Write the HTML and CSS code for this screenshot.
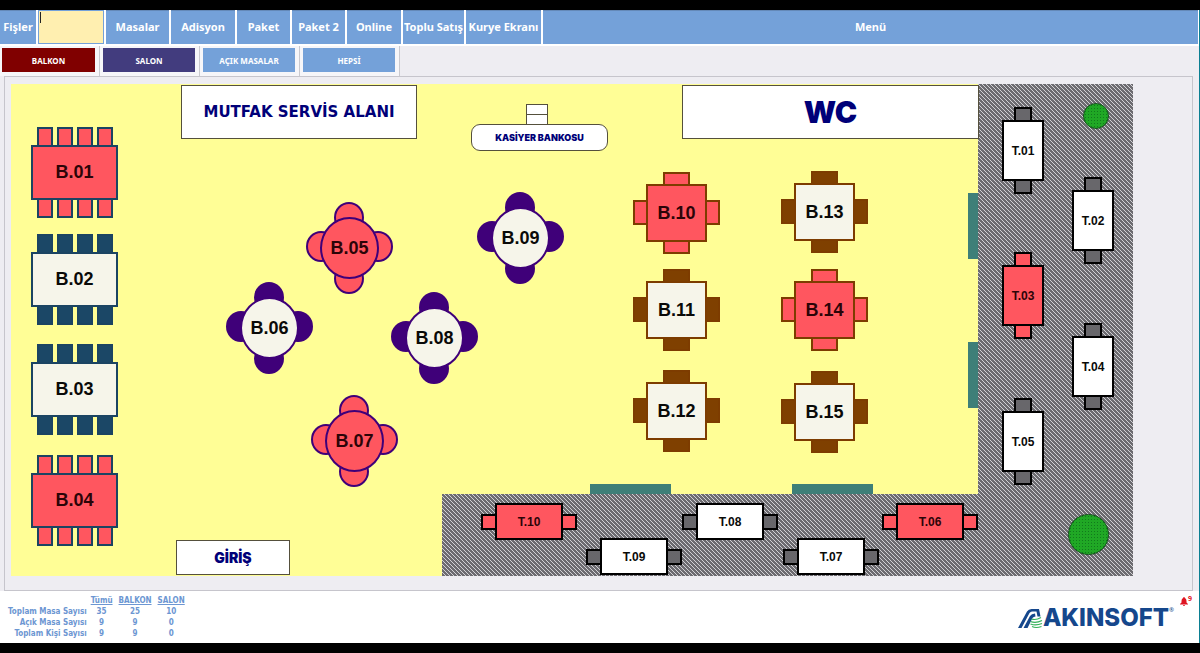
FILE: index.html
```html
<!DOCTYPE html>
<html lang="tr">
<head>
<meta charset="utf-8">
<title>Masalar</title>
<link rel="stylesheet" href="styles.css">
</head>
<body>
<div class="app">
  <nav class="menu" aria-label="Ana menü">
    <button type="button">Fişler</button>
    <div class="code"><input type="text" aria-label="Fiş kodu"><span class="caret"></span></div>
    <button type="button">Masalar</button>
    <button type="button">Adisyon</button>
    <button type="button">Paket</button>
    <button type="button">Paket 2</button>
    <button type="button">Online</button>
    <button type="button">Toplu Satış</button>
    <button type="button">Kurye Ekranı</button>
    <button type="button">Menü</button>
  </nav>

  <div class="areas">
    <div class="area"><button type="button" class="area-btn red">BALKON</button></div>
    <div class="area"><button type="button" class="area-btn indigo">SALON</button></div>
    <div class="area"><button type="button" class="area-btn">AÇIK MASALAR</button></div>
    <div class="area"><button type="button" class="area-btn">HEPSİ</button></div>
  </div>

  <main class="panel">
    <div class="plan">
      <svg class="terrace" viewBox="0 0 691 492" aria-hidden="true">
        <defs>
          <pattern id="hatch" width="4" height="4" patternUnits="userSpaceOnUse">
            <rect width="4" height="4" fill="#6c6b70"/>
            <path d="M-1 -1 L5 5 M3 -1 L5 1 M-1 3 L1 5" stroke="#d2d1d5" stroke-width="1"/>
          </pattern>
        </defs>
        <path d="M536 0 H691 V492 H0 V410 H536Z" fill="url(#hatch)"/>
      </svg>
      <div class="door door-v door-1"></div>
      <div class="door door-v door-2"></div>
      <div class="door door-h door-3"></div>
      <div class="door door-h door-4"></div>
      <div class="tree tree-small"></div>
      <div class="tree tree-large"></div>

      <div class="sign sign-kitchen">MUTFAK SERVİS ALANI</div>
      <div class="sign sign-wc">WC</div>
      <div class="sign sign-entry">GİRİŞ</div>
      <div class="till"></div>
      <div class="sign sign-cashier">KASİYER BANKOSU</div>

      <button type="button" class="table long busy b01"><span class="row"><i></i><i></i><i></i><i></i></span><span class="top">B.01</span><span class="row"><i></i><i></i><i></i><i></i></span></button>
      <button type="button" class="table long b02"><span class="row"><i></i><i></i><i></i><i></i></span><span class="top">B.02</span><span class="row"><i></i><i></i><i></i><i></i></span></button>
      <button type="button" class="table long b03"><span class="row"><i></i><i></i><i></i><i></i></span><span class="top">B.03</span><span class="row"><i></i><i></i><i></i><i></i></span></button>
      <button type="button" class="table long busy b04"><span class="row"><i></i><i></i><i></i><i></i></span><span class="top">B.04</span><span class="row"><i></i><i></i><i></i><i></i></span></button>

      <button type="button" class="table round busy b05"><i class="n"></i><i class="w"></i><i class="e"></i><i class="s"></i><span class="top">B.05</span></button>
      <button type="button" class="table round b06"><i class="n"></i><i class="w"></i><i class="e"></i><i class="s"></i><span class="top">B.06</span></button>
      <button type="button" class="table round busy b07"><i class="n"></i><i class="w"></i><i class="e"></i><i class="s"></i><span class="top">B.07</span></button>
      <button type="button" class="table round b08"><i class="n"></i><i class="w"></i><i class="e"></i><i class="s"></i><span class="top">B.08</span></button>
      <button type="button" class="table round b09"><i class="n"></i><i class="w"></i><i class="e"></i><i class="s"></i><span class="top">B.09</span></button>

      <button type="button" class="table square busy b10"><i class="n"></i><i class="w"></i><i class="e"></i><i class="s"></i><span class="top">B.10</span></button>
      <button type="button" class="table square b11"><i class="n"></i><i class="w"></i><i class="e"></i><i class="s"></i><span class="top">B.11</span></button>
      <button type="button" class="table square b12"><i class="n"></i><i class="w"></i><i class="e"></i><i class="s"></i><span class="top">B.12</span></button>
      <button type="button" class="table square b13"><i class="n"></i><i class="w"></i><i class="e"></i><i class="s"></i><span class="top">B.13</span></button>
      <button type="button" class="table square busy b14"><i class="n"></i><i class="w"></i><i class="e"></i><i class="s"></i><span class="top">B.14</span></button>
      <button type="button" class="table square b15"><i class="n"></i><i class="w"></i><i class="e"></i><i class="s"></i><span class="top">B.15</span></button>

      <button type="button" class="table pair tall t01"><i></i><span class="top">T.01</span><i></i></button>
      <button type="button" class="table pair tall t02"><i></i><span class="top">T.02</span><i></i></button>
      <button type="button" class="table pair tall busy t03"><i></i><span class="top">T.03</span><i></i></button>
      <button type="button" class="table pair tall t04"><i></i><span class="top">T.04</span><i></i></button>
      <button type="button" class="table pair tall t05"><i></i><span class="top">T.05</span><i></i></button>
      <button type="button" class="table pair wide busy t06"><i></i><span class="top">T.06</span><i></i></button>
      <button type="button" class="table pair wide t07"><i></i><span class="top">T.07</span><i></i></button>
      <button type="button" class="table pair wide t08"><i></i><span class="top">T.08</span><i></i></button>
      <button type="button" class="table pair wide t09"><i></i><span class="top">T.09</span><i></i></button>
      <button type="button" class="table pair wide busy t10"><i></i><span class="top">T.10</span><i></i></button>
    </div>
  </main>

  <footer class="status">
    <table class="totals">
      <thead>
        <tr><td></td><th scope="col">Tümü</th><th scope="col">BALKON</th><th scope="col">SALON</th></tr>
      </thead>
      <tbody>
        <tr><th scope="row">Toplam Masa Sayısı</th><td>35</td><td>25</td><td>10</td></tr>
        <tr><th scope="row">Açık Masa Sayısı</th><td>9</td><td>9</td><td>0</td></tr>
        <tr><th scope="row">Toplam Kişi Sayısı</th><td>9</td><td>9</td><td>0</td></tr>
      </tbody>
    </table>
    <div class="brand">
      <svg class="mark" width="25" height="21" viewBox="0 0 25 21" aria-hidden="true">
        <path d="M0 20 L9 3.500 Q10.500 1 13.500 1 H21 L22.500 8.500 H19.500 L18.500 3.500 H14 Q12.500 3.500 11.500 5 L3.500 20Z" fill="#15478c"/>
        <path d="M5.500 20 L12 8 Q13.500 5.500 17 5.500 L17.500 8.500 Q15.500 8.500 14.500 10 L9.500 20Z" fill="#15478c"/>
        <path d="M13.500 11 Q18 12.500 23 9.500 M12.500 13.500 Q18 15.500 24 12.500 M12.500 16 Q18 18 24 15.500 M14 18.500 Q18 20.500 23.500 18.500" fill="none" stroke="#35b25a" stroke-width="1.200"/>
      </svg>
      <span class="wordmark">AKINSOFT</span><span class="reg">®</span>
    </div>
    <button type="button" class="alert" aria-label="Bildirimler">
      <svg width="8" height="9" viewBox="0 0 8 9" aria-hidden="true"><path d="M4 0 Q4.800 0 4.800 1 Q6.500 1.700 6.500 4 V5.500 L8 7 V7.500 H0 V7 L1.500 5.500 V4 Q1.500 1.700 3.200 1 Q3.200 0 4 0Z M3 8 H5 Q5 9 4 9 Q3 9 3 8Z" fill="#df1522"/></svg>
      <span>9</span>
    </button>
  </footer>
</div>
</body>
</html>
```
FILE: styles.css
```css
* { box-sizing: border-box; }

body {
  margin: 0;
  padding: 10px 0;
  min-height: 100vh;
  background: #000;
  font-family: "Noto Sans", "Open Sans", sans-serif;
  display: flex;
}

button {
  border: 0;
  padding: 0;
  font: inherit;
  color: inherit;
  background: none;
  cursor: pointer;
}

.app {
  flex: 1;
  min-width: 0;
  display: flex;
  flex-direction: column;
  background: #eeedf2;
  border-right: 1px solid #0b7f92;
}

/* main menu */
.menu {
  display: grid;
  grid-template-columns: 36px 66px 63px 64px 53px 53px 54px 61px 75px 1fr;
  gap: 2px;
  height: 36px;
  padding-right: 1px;
  border-bottom: 2px solid #fff;
  background: #fff;
}
.menu button {
  padding-bottom: 2px;
  background: #74a1d9;
  border-top: 1px solid #6489b8;
  color: #fff;
  font-size: 11px;
  font-weight: 700;
  white-space: nowrap;
}
.code { position: relative; display: flex; }
.code input {
  flex: 1;
  min-width: 0;
  border: 1px solid #74a1d9;
  background: #ffefb0;
  padding: 0 4px;
  font: inherit;
}
.caret {
  position: absolute;
  left: 2px;
  top: 2px;
  width: 1px;
  height: 11px;
  background: #222;
}

/* area tabs */
.areas { display: flex; height: 30px; }
.area {
  width: 100px;
  padding: 2px 4px 4px 2px;
  border-right: 1px solid #c9c9cf;
  background: #f6f6f9;
  display: flex;
}
.area + .area { padding-left: 3px; }
.area-btn {
  flex: 1;
  background: #74a1d9;
  color: #fff;
  font-size: 8px;
  font-weight: 700;
}
.area-btn.red { background: #800000; }
.area-btn.indigo { background: #423c7e; }

/* floor plan */
.panel {
  margin: 0 6px 0 4px;
  padding: 7px 6px 14px;
  border: 1px solid #c6c5cc;
  overflow: auto;
}
.plan {
  position: relative;
  width: 1122px;
  height: 492px;
  background: #fffe96;
}
.terrace {
  position: absolute;
  right: 0;
  bottom: 0;
  width: 691px;
  height: 492px;
}

.door { position: absolute; background: #3e7f78; }
.door-v { width: 10px; height: 66px; left: 957px; }
.door-h { width: 81px; height: 10px; top: 400px; }
.door-1 { top: 109px; }
.door-2 { top: 258px; }
.door-3 { left: 579px; }
.door-4 { left: 781px; }

.tree {
  position: absolute;
  border: 1px solid #14501c;
  border-radius: 50%;
  background: radial-gradient(circle, #117a1c 0 1px, #20a825 1px) 0 0 / 3px 3px;
}
.tree-small { left: 1072px; top: 19px; width: 26px; height: 26px; }
.tree-large { left: 1057px; top: 430px; width: 41px; height: 41px; }

.sign {
  position: absolute;
  display: flex;
  align-items: center;
  justify-content: center;
  border: 1px solid #55503c;
  background: #fff;
  color: #000078;
  font-family: Inter, "Liberation Sans", sans-serif;
  font-weight: 900;
  white-space: nowrap;
}
.sign-kitchen { left: 170px; top: 1px; width: 236px; height: 54px; font-family: "DejaVu Sans", sans-serif; font-size: 15px; }
.sign-wc { left: 671px; top: 1px; width: 297px; height: 54px; font-size: 30px; }
.sign-entry { left: 165px; top: 456px; width: 114px; height: 35px; font-size: 14px; }
.sign-cashier { left: 460px; top: 40px; width: 137px; height: 27px; font-size: 9px; border-radius: 9px; }
.till {
  position: absolute;
  left: 515px;
  top: 20px;
  width: 22px;
  height: 21px;
  border: 1px solid #55503c;
  background: linear-gradient(#55503c, #55503c) 0 9px / 100% 1px no-repeat #fff;
}

/* tables: --line outlines, --seat fills chairs, --fill fills the table top */
.table {
  position: absolute;
  --fill: #f6f5ea;
  font-family: "Liberation Sans", Arial, sans-serif;
  font-size: 18px;
  font-weight: 700;
  color: #0a0a08;
}
.table i { display: block; background: var(--seat); border: 2px solid var(--line); }
.top {
  display: flex;
  align-items: center;
  justify-content: center;
  background: var(--fill);
  border: 2px solid var(--line);
}
.table.busy { --fill: #ff565f; --seat: #ff565f; color: #2c0408; }

.long {
  --line: #1b4462;
  --seat: #1b4766;
  display: flex;
  flex-direction: column;
  width: 87px;
}
.long .row { display: flex; justify-content: center; gap: 4px; }
.long i { width: 16px; height: 18px; }
.long .row:first-child i { border-bottom: 0; }
.long .row:last-child i { border-top: 0; }
.long .top { height: 55px; }

.round { --line: #3f0079; --seat: #3f0079; width: 87px; height: 92px; }
.round i { position: absolute; width: 30px; height: 31px; border-radius: 50%; }
.round .top { position: absolute; inset: 15px 14px; border-radius: 50%; }
.round .n { left: 28px; top: 0; }
.round .s { left: 28px; bottom: 0; }
.round .w { left: 0; top: 29px; }
.round .e { right: 0; top: 29px; }

.square { --line: #7d3c00; --seat: #7f4000; width: 87px; height: 82px; }
.square i { position: absolute; }
.square .n, .square .s { left: 30px; width: 27px; height: 14px; }
.square .w, .square .e { top: 28px; width: 15px; height: 25px; }
.square .n { top: 0; }
.square .s { bottom: 0; }
.square .w { left: 0; }
.square .e { right: 0; }
.square .top { position: absolute; inset: 12px 13px; }

.pair {
  --line: #000;
  --seat: #68676b;
  --fill: #fff;
  display: flex;
  align-items: center;
  font-size: 12px;
}
.tall { flex-direction: column; width: 42px; }
.tall .top { width: 42px; height: 61px; }
.tall i { width: 18px; height: 13px; }
.tall i:first-child { border-bottom: 0; }
.tall i:last-child { border-top: 0; }
.wide .top { width: 68px; height: 37px; }
.wide i { width: 14px; height: 16px; }
.wide i:first-child { border-right: 0; }
.wide i:last-child { border-left: 0; }

.b01 { left: 20px; top: 43px; }
.b02 { left: 20px; top: 150px; }
.b03 { left: 20px; top: 260px; }
.b04 { left: 20px; top: 371px; }
.b05 { left: 295px; top: 118px; }
.b06 { left: 215px; top: 198px; }
.b07 { left: 300px; top: 311px; }
.b08 { left: 380px; top: 208px; }
.b09 { left: 466px; top: 108px; }
.b10 { left: 622px; top: 88px; }
.b11 { left: 622px; top: 185px; }
.b12 { left: 622px; top: 286px; }
.b13 { left: 770px; top: 87px; }
.b14 { left: 770px; top: 185px; }
.b15 { left: 770px; top: 287px; }
.t01 { left: 991px; top: 23px; }
.t02 { left: 1061px; top: 93px; }
.t03 { left: 991px; top: 168px; }
.t04 { left: 1061px; top: 239px; }
.t05 { left: 991px; top: 314px; }
.t06 { left: 871px; top: 419px; }
.t07 { left: 772px; top: 454px; }
.t08 { left: 671px; top: 419px; }
.t09 { left: 575px; top: 454px; }
.t10 { left: 470px; top: 419px; }

/* footer */
.status {
  flex: 1;
  display: flex;
  align-items: flex-start;
  background: #fff;
  padding: 4px 6px 2px 5px;
}
.totals {
  border-collapse: collapse;
  color: #6c96d2;
  font-family: "DejaVu Sans Condensed", "DejaVu Sans", sans-serif;
  font-size: 8px;
  line-height: 11px;
}
.totals th, .totals td { padding: 0 3px; text-align: center; font-weight: 700; }
.totals thead th { text-decoration: underline; }
.totals tbody th { padding-right: 1px; text-align: right; }
.brand { margin-left: auto; display: flex; align-items: center; padding: 11px 6px 0 0; color: #15478c; }
.wordmark {
  font-family: Inter, sans-serif;
  font-weight: 800;
  font-size: 24px;
  line-height: 24px;
}
.reg { font-size: 6px; line-height: 8px; align-self: flex-start; }
.alert { display: flex; margin-right: 1px; color: #df1522; font-size: 7px; font-weight: 700; line-height: 8px; }
.alert svg { margin-top: 2px; }
```
